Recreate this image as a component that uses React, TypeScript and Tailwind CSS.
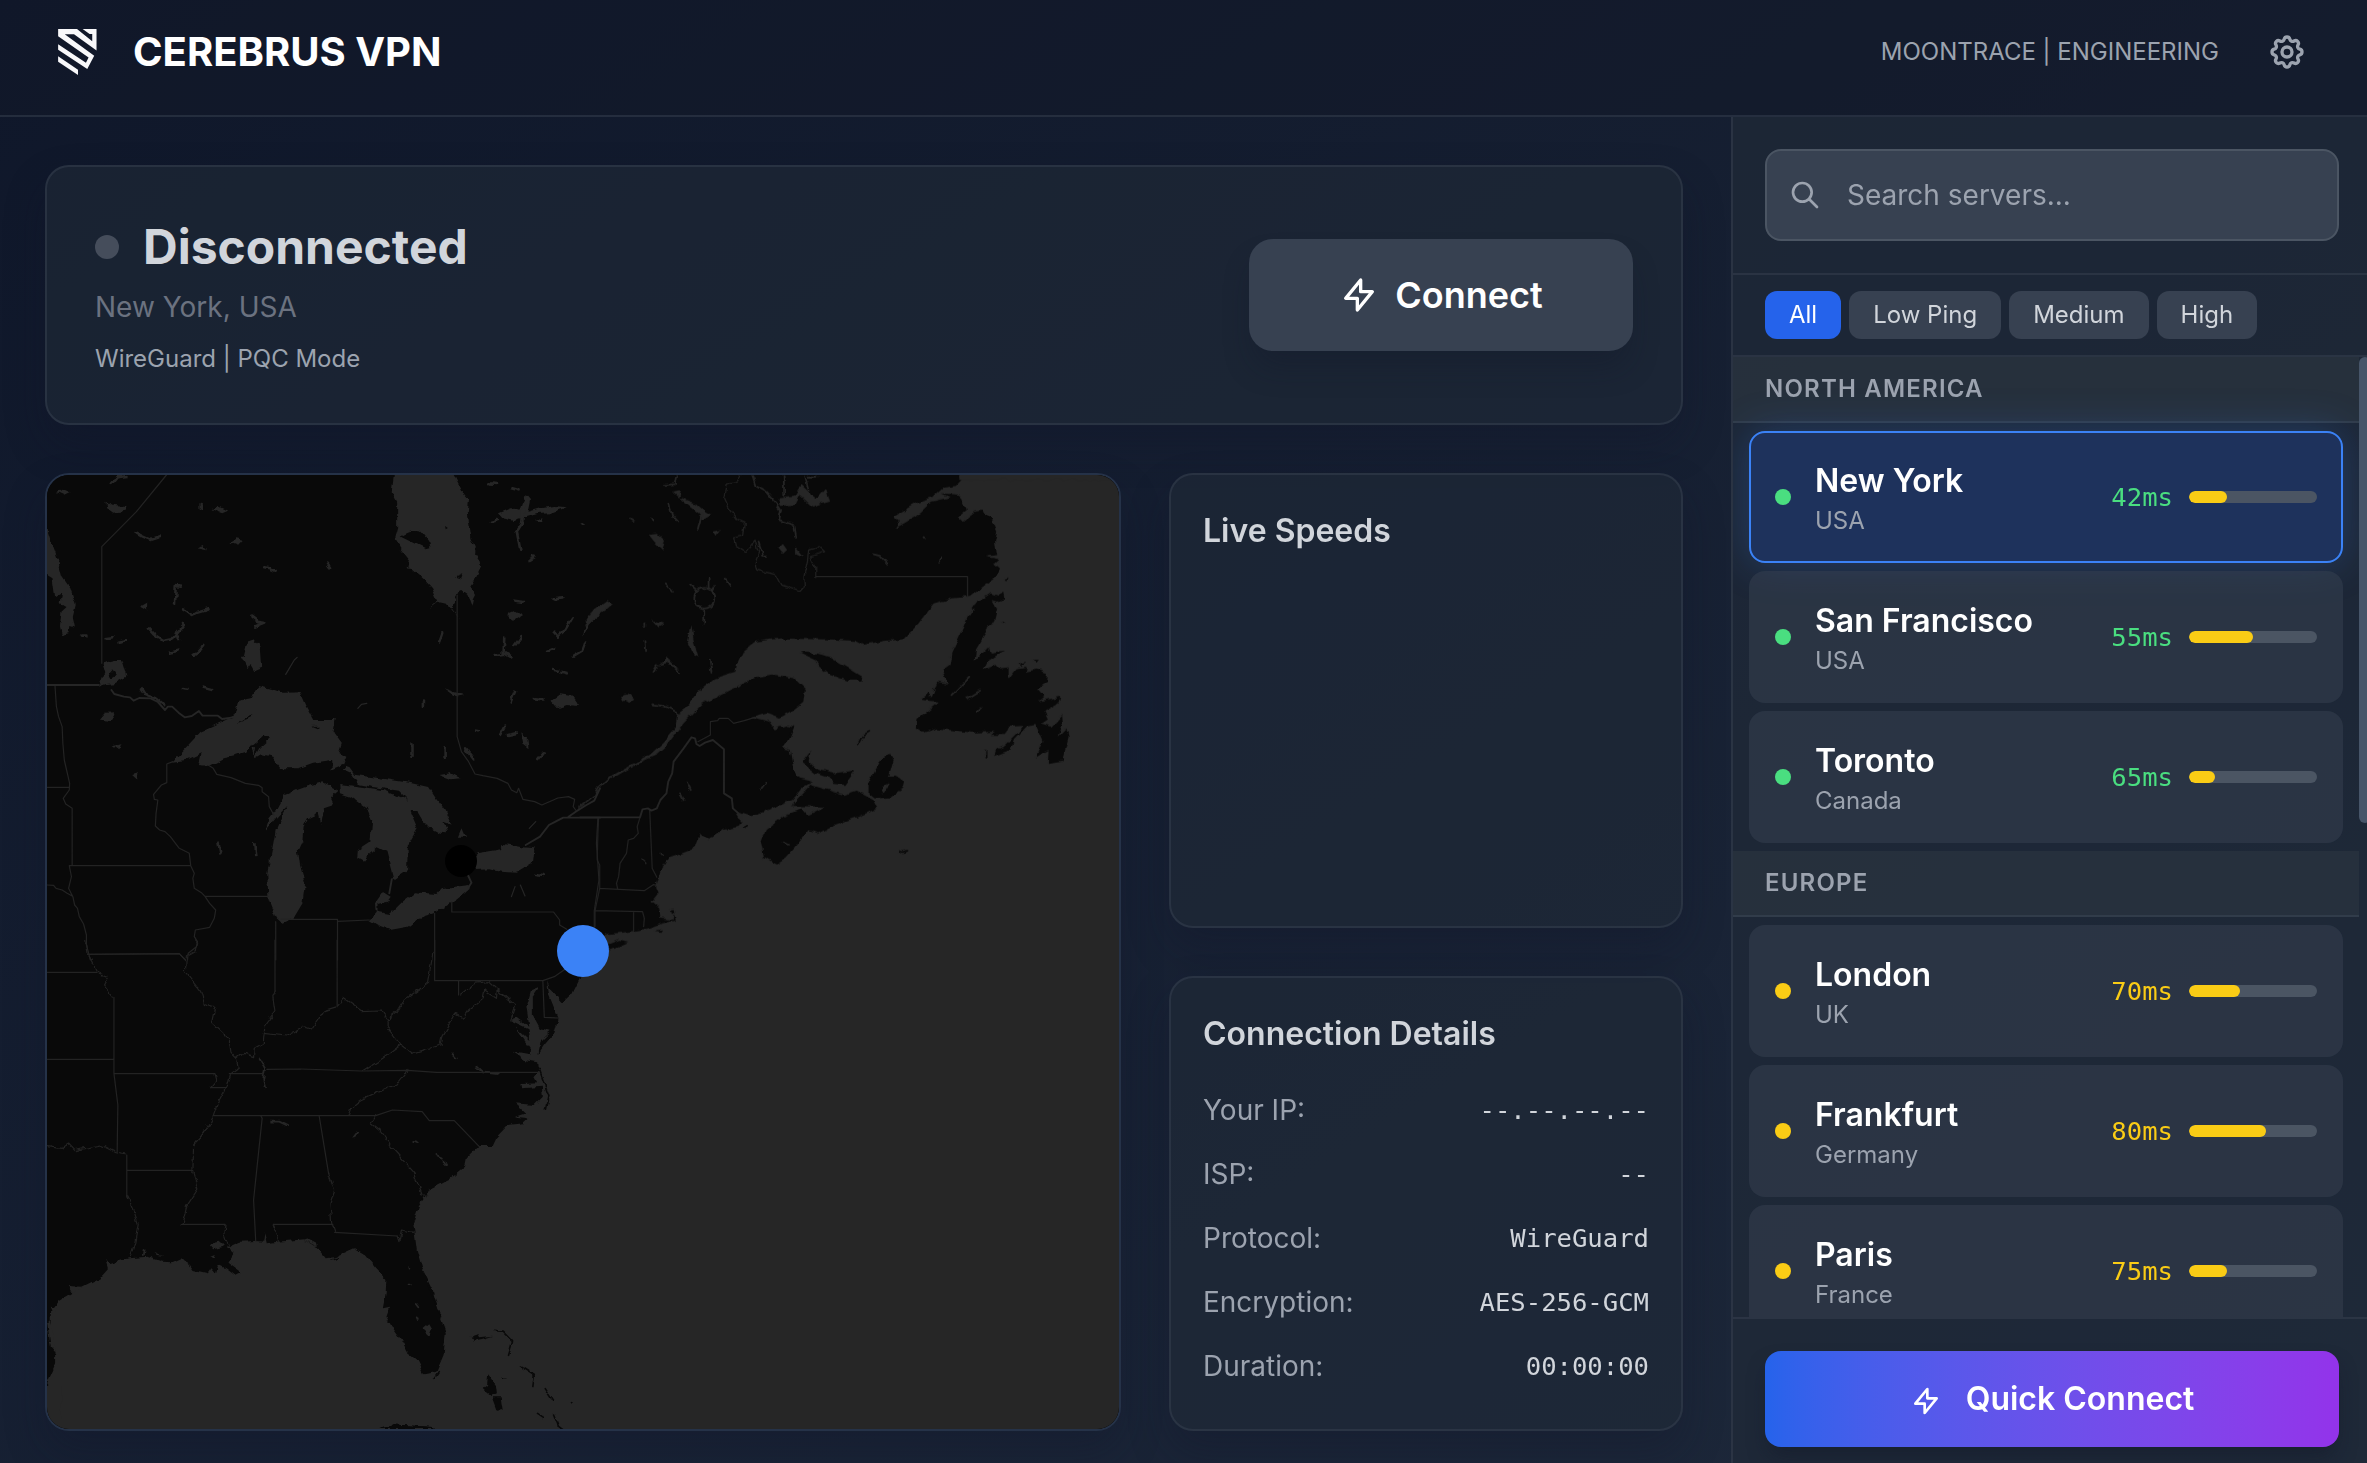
import React from "react";

type Server = { city: string; country: string; ping: number; load: number };

const northAmerica: Server[] = [
  { city: "New York", country: "USA", ping: 42, load: 30 },
  { city: "San Francisco", country: "USA", ping: 55, load: 50 },
  { city: "Toronto", country: "Canada", ping: 65, load: 20 },
];

const europe: Server[] = [
  { city: "London", country: "UK", ping: 70, load: 40 },
  { city: "Frankfurt", country: "Germany", ping: 80, load: 60 },
  { city: "Paris", country: "France", ping: 75, load: 30 },
];

const details = [
  ["Your IP:", "--.--.--.--"],
  ["ISP:", "--"],
  ["Protocol:", "WireGuard"],
  ["Encryption:", "AES-256-GCM"],
  ["Duration:", "00:00:00"],
];

const BOLT = "M13 10V3L4 14h7v7l9-11h-7z";
const SEARCH = "M21 21l-6-6m2-5a7 7 0 11-14 0 7 7 0 0114 0z";
const COG =
  "M10.325 4.317c.426-1.756 2.924-1.756 3.35 0a1.724 1.724 0 002.573 1.066c1.543-.94 3.31.826 2.37 2.37a1.724 1.724 0 001.065 2.572c1.756.426 1.756 2.924 0 3.35a1.724 1.724 0 00-1.066 2.573c.94 1.543-.826 3.31-2.37 2.37a1.724 1.724 0 00-2.572 1.065c-.426 1.756-2.924 1.756-3.35 0a1.724 1.724 0 00-2.573-1.066c-1.543.94-3.31-.826-2.37-2.37a1.724 1.724 0 00-1.065-2.572c-1.756-.426-1.756-2.924 0-3.35a1.724 1.724 0 001.066-2.573c-.94-1.543.826-3.31 2.37-2.37.996.608 2.296.07 2.572-1.065z M15 12a3 3 0 11-6 0 3 3 0 016 0z";

function Icon({ d, className }: { d: string; className: string }) {
  return (
    <svg viewBox="0 0 24 24" fill="none" stroke="currentColor" strokeWidth={2} strokeLinecap="round" strokeLinejoin="round" className={className}>
      <path d={d} />
    </svg>
  );
}

function Logo() {
  return (
    <svg viewBox="84 58 117 139" className="h-[46px] w-[39px]" fill="#f8f8fa">
      <path d="M84 58H141L187 95V73H179L158 58H200V123L132 74H104L193 139L172 179L84 121V104L168 160L176 144L84 80Z" />
      <path d="M84 140L144 181V197L84 157Z" />
    </svg>
  );
}

const WATER = "#262626";
const LAND = "#090909";

const lakesNW = [
  "M991 45L985 95L1000 125L1000 205L992 235L1008 265L1038 305L1035 318L1022 325L1042 327L1075 358L1098 385L1112 420L1086 446L1112 425L1140 432L1178 481L1155 447L1168 400L1182 393L1197 405L1208 437L1212 418L1218 405L1205 380L1222 350L1235 322L1230 300L1218 280L1220 262L1208 235L1198 160L1201 120L1185 100L1160 45L1150 20H985Z",
  "M370 905L400 872L450 815L520 780L545 765L555 722L590 715L600 692L612 678L650 688L680 698L730 697L745 735L768 780L828 780L822 815L845 848L836 880L858 890L848 915L820 928L818 900L765 908L722 925L675 925L650 890L620 882L600 895L598 870L590 855L575 878L545 888L515 895L475 918L442 915L450 880L410 900Z",
  "M660 1375L640 1320L636 1240L648 1180L660 1110L680 1060L690 1040L660 1075L630 1115L640 1080L660 1055L685 1005L720 990L745 980L790 967L835 990L812 1012L822 1035L795 1045L788 1092L780 1060L750 1075L738 1100L735 1140L722 1170L728 1215L742 1270L735 1330L710 1375L675 1390Z",
  "M838 972L900 980L960 990L1030 1020L1005 992L930 980L890 972L870 940L848 930L860 915L880 944L950 955L1035 968L1090 982L1110 1015L1135 1050L1155 1095L1130 1085L1140 1120L1120 1118L1080 1095L1055 1050L1035 1050L1057 1105L1030 1155L1028 1230L990 1258L970 1175L945 1162L920 1185L905 1205L888 1195L890 1170L925 1145L930 1080L915 1045L870 1010L840 1000Z",
  "M922 1380L940 1358L938 1330L960 1296L982 1310L972 1325L945 1332L945 1355L980 1362L1015 1325L1050 1297L1110 1302L1125 1285L1200 1275L1200 1290L1165 1320L1105 1360L1060 1375L1030 1400L980 1410L950 1398Z",
  "M1222 1180L1290 1168L1300 1152L1350 1162L1385 1165L1380 1210L1335 1238L1290 1235L1260 1228L1218 1230Z",
  "M20 208L28 235L50 300L62 350L85 385L100 435L92 470L98 500L82 495L80 520L62 525L56 500L60 455L75 440L58 430L62 395L42 408L35 355L20 345L0 340V200Z",
  "M570 590L580 545L600 538L618 560L622 620L600 630L590 612L580 628L562 590Z",
  "M165 680L180 640L172 610L210 600L228 600L242 650L210 670L185 672Z",
  "M186 125L205 135L245 138L240 152L205 158L188 145Z",
  "M45 95L65 88L88 98L70 107Z M480 148L500 138L527 152L510 160Z M440 262L455 252L468 268Z M533 248L550 238L568 242L555 257Z",
  "M165 782L185 758L212 757L195 785Z M280 440L300 428L300 452Z M206 855L228 850L222 868Z M258 945L275 940L275 962Z M1170 1130L1180 1105L1190 1130Z",
  "M1285 160L1320 145L1345 152L1360 105L1372 120L1365 155L1400 145L1440 138L1475 142L1430 160L1390 162L1330 180L1295 172Z M1385 180L1410 172L1405 185Z",
  "M1308 465L1330 455L1350 468L1325 485Z M1432 722L1460 700L1490 705L1512 738L1475 735L1450 745Z M1345 820L1365 840L1368 865L1350 850Z",
  "M1520 530L1530 480L1568 430V460L1540 490Z M1118 945L1150 940L1178 955L1150 958Z M1130 685L1150 692L1185 705L1165 712Z",
];

const streamsNW = [
  "M245 48L215 52L198 75 M268 218L285 228L310 240L338 230 M628 322L642 325L660 332 M803 308L812 322 M450 132L450 146",
  "M395 380L380 378L378 430 M400 448L425 465L440 455L472 445 M305 505L318 520L345 540L370 535L382 520L403 492 M380 520L392 540 M362 578L388 572 M430 585L445 575L460 555",
  "M592 470L610 485L628 488L600 500 M118 530L130 530 M180 535L203 532 M220 545L245 540",
  "M280 685L290 700L320 712L345 735 M400 684L416 686 M458 683L482 690 M500 1150L505 1180 M600 1152L603 1185 M1043 850L1043 888 M1133 862L1133 892 M1190 865L1212 895",
  "M1258 70L1280 72 M1320 82L1340 88 M1355 130L1350 190L1335 215L1345 270 M1262 185L1282 180 M1368 300L1385 290 M1328 422L1352 425 M1438 418L1466 415",
  "M1300 535L1298 578L1320 592 M1276 585L1300 582 M1328 558L1348 528 M1438 515L1450 530L1470 510L1490 475 M1420 575L1440 565 M1495 590L1518 575L1528 545 M1435 630L1450 632 M1460 635L1475 640",
  "M1318 725L1330 695 M1383 715L1410 718 M1288 825L1300 800 M1310 825L1332 820 M1395 900L1410 880 M1118 545L1126 520 M1388 1242L1410 1245 M1218 812L1226 814 M1515 190L1522 192 M1075 722V738",
];

const fineStreamsNW =
  "M720 592L712 600L688 643 M890 745L900 733L915 730 M1370 1105L1388 1085 M1320 1310L1330 1280 M1345 1275L1358 1308";

const bordersNW =
  "M354 45L270 155L173 260V610 M42 678L46 740L52 770L62 800L64 850L68 900L83 970L82 990L65 1015L72 1032L90 1045V1217 M20 982H82 M82 1217H422 M372 905L355 912V968L340 975L318 1003L320 1018L330 1020L325 1060L323 1098L335 1110L350 1115L365 1130L390 1165L418 1180L422 1217L432 1240L428 1255L432 1285L452 1298L462 1309 M462 1309H640 M475 918L485 925L495 943L535 953L575 970L612 976L622 983L622 995L640 1010L642 1040L655 1065 M82 1217L88 1250L80 1285L92 1310L97 1335L105 1345L110 1370L122 1392L130 1425L130 1455L141 1500 M20 1275L38 1276L45 1285L62 1290L76 1300L90 1308 M462 1309L475 1330L492 1350L488 1375L475 1402L435 1410L432 1430L441 1445L438 1460L415 1480L413 1500 M133 1483L390 1481L408 1500 M660 1385V1500 M675 1378H833V1500 M833 1384L922 1380 M1105 1360V1500 M1153 1325V1356H1438L1455 1380L1455 1395L1475 1408 M1168 405V830L1180 875L1200 905L1218 942L1240 947L1280 955L1310 970L1320 990L1335 998L1340 985L1352 1018L1385 1025L1405 1035L1450 1014L1480 1010L1497 1018L1493 1040L1500 1050 M1562 1075L1558 1150L1562 1210L1565 1260L1552 1352V1405";

const heavyNW =
  "M20 675H165 M200 690L208 702L235 710L252 712L262 722L278 714L310 715L330 726L350 750L358 740L370 740L388 758L405 772L425 768L445 753L455 767L498 767L510 777L540 772 M985 1258L978 1300 M1198 1245L1208 1268L1200 1282 M1360 1155L1400 1130L1425 1095L1465 1073H1568 M1480 1070L1500 1055L1530 1035L1552 1022L1568 985";

const oceanNE =
  "M1060 45L1068 60L1055 75L1020 80L985 115L940 130L900 155L878 170L893 185L880 207L900 195L940 170L985 125L1035 112L1010 100L1065 105L1083 150L1060 170L1072 183L1105 155L1127 152L1150 170L1168 215L1162 245L1168 285L1135 290L1172 298L1160 310L1176 325L1165 350L1092 410L1040 415L990 430L940 500L905 538L850 543L792 555L770 543L700 538L620 537L560 535L490 545L458 570L440 610L435 635L375 655L330 695L300 740L275 760L270 800L235 845L195 885L150 910L85 950L90 956L160 912L215 885L240 860L290 790L340 735L420 690L490 655L550 645L600 655L632 690L628 725L600 750L560 773L522 758L480 770L530 785L545 808L580 795L600 800L585 840L565 865L590 870L600 930L615 955L655 965L620 985L595 1020L520 1052L500 1060L470 1067L435 1055L452 1085L445 1100L400 1110L360 1140L335 1120L320 1165L285 1180L250 1190L225 1235L213 1280L220 1298L200 1325L222 1345L225 1375L262 1380L265 1360L250 1350L262 1347L268 1382L230 1390L190 1405L120 1418L75 1422L60 1440L10 1500H1568V45Z";

const islandsNE = [
  "M615 577Q640 570 700 592L760 630L790 650L788 662L750 662L700 645L670 620L660 600Z",
  "M1110 430L1150 400L1170 407L1185 398L1188 415L1170 425L1155 420L1168 445L1160 480L1130 530L1108 570L1105 605L1145 560L1150 578L1187 572L1140 605L1130 630L1165 615L1175 625L1200 622L1200 660L1225 625L1250 620L1248 635L1280 628L1310 640L1308 665L1280 685L1300 710L1285 725L1345 710L1340 730L1300 755L1310 775L1290 790L1320 800L1350 765L1352 790L1340 830L1362 805L1368 830L1350 905L1310 912L1312 870L1275 893L1295 845L1275 795L1250 800L1215 840L1205 870L1160 888L1165 870L1190 858L1225 820L1240 798L1200 800L1190 825L1150 825L1165 815L1100 818L1000 805L960 818L943 805L945 780L1005 725L955 720L975 700L985 712L1000 665L1030 672L1015 630L1035 615L1040 580L1075 500L1085 470Z",
  "M868 878L878 900L865 950L880 950L910 965L905 985L870 1012L825 1015L808 1000L808 970L840 905Z",
  "M590 1038L645 975L740 1005L775 992L820 1018L832 1045L780 1070L700 1102L670 1120L640 1110L600 1165L575 1195L550 1213L515 1190L507 1150L520 1110L570 1070L625 1045L640 1065L685 1040Z",
  "M645 875L640 905L665 930L710 940L770 932L740 975L712 972L700 955L660 940L622 908Z",
  "M75 1455L110 1440L135 1445L85 1468Z M1228 612L1250 605L1235 618Z M1268 600L1282 600L1275 608Z M1180 485L1188 488L1182 492Z M1192 356L1200 352L1196 362Z M1132 870H1138V892H1133Z M212 1412L230 1408L225 1416Z",
];

const lakesNE = [
  "M260 95L280 90L275 110L325 130L345 150L368 165L345 180L330 160L290 125Z",
  "M555 115L600 110L620 75L640 95L665 115L690 85L700 125L650 140L615 105L600 135L560 138Z",
  "M190 225L215 222L238 245L230 270L205 245Z M555 265L568 252L580 270L568 282Z M605 262L625 290L605 280Z M370 215L392 210L378 228Z",
  "M10 500L30 455L75 420L92 432L50 470Z M115 705L135 700L152 718L138 732L120 720Z M202 480L235 492L220 502Z",
  "M302 545L312 495L318 540L332 592L318 585Z M215 620L235 605L245 585L255 605L275 625L245 612Z M842 985L868 970L850 1000Z",
];

const streamsNE = [
  "M235 75L268 72L272 48 M250 135L258 165L278 188 M340 165L330 210 M140 175L150 182 M198 175L205 188 M240 370L260 395 M405 355L418 375",
  "M485 48L495 80L520 95L548 130L560 150L555 180L600 195L605 230 M500 245L510 290L522 290 M570 45L572 110 M630 50L640 90 M640 50L662 50",
  "M820 283L838 288L862 315 M1008 305L1012 292 M962 228L968 236 M205 733L240 740L278 760 M363 600L368 635 M180 490V500 M183 540L185 570 M205 635L215 615 M262 620L276 636",
  "M330 390A28 30 0 1 1 364 440A28 30 0 0 1 320 415A28 30 0 0 1 330 390 M345 450L345 490 M308 375L325 392 M360 355V385 M378 378L368 395",
  "M0 1042L40 1005L50 985L85 953 M280 1000L290 1020 M300 965L310 990 M508 988L522 968 M172 1198L184 1210 M225 1178L232 1186 M570 1148L582 1154 M1040 705L1090 650 M1085 715L1120 692 M1112 755L1124 742",
];

const wigglyNE =
  "M450 45L440 65L412 75L405 115L420 150L440 180L460 190L455 225L430 230L435 255L465 275L490 240L500 280L490 310L495 330L550 345L565 375L615 395L628 380L627 350L637 300L640 270L670 260L685 275L645 290L660 320L660 350";

const bordersNE =
  "M660 350H1085V410 M330 845L365 825V785L385 782L390 775L415 775L430 790L460 782L490 772 M195 1048L202 1225L215 1252 M168 1072L160 1100L163 1120L150 1135L135 1140L130 1180L112 1210L108 1250L102 1270L105 1285 M55 1285L180 1292L205 1274L212 1275 M42 1352L175 1355L180 1375L178 1400 M150 1355V1412 M52 1075L50 1120L48 1200L55 1215V1285L42 1352V1400";

const heavyNE =
  "M0 1072H168L175 1048L190 1045L200 1052L215 1045L225 1020L242 1000L247 965L258 940L262 905L290 865L312 832L322 835L326 852L335 858L350 848L372 840L403 868V1000L425 1015L428 1045L452 1068L452 1085";

const oceanSE =
  "M20 1330L45 1270V1240L30 1190V1120L55 1080L110 1045L165 1015L190 985L183 960L200 972L250 955L300 950L340 965L370 967L395 955L420 975L430 990L470 1000L480 985L492 1000L500 975L520 985L545 1005L563 995L525 965L542 935L520 925L560 905L605 903L625 905L628 880L635 910L665 905L740 898L775 920L800 955L825 952L880 925L905 940L940 985L970 1020L968 1060L960 1105L980 1100L970 1130L990 1170L1010 1200L1030 1240L1055 1260L1075 1303L1110 1295L1130 1245L1136 1180L1120 1130L1100 1050L1070 985L1055 930L1045 850L1060 800L1090 750L1145 720L1190 680L1195 655L1230 618L1265 618L1275 595L1310 555L1355 550L1370 535L1330 530L1360 520L1330 490L1385 495L1408 470L1405 440L1350 445L1348 432L1395 430L1385 410L1395 397L1392 367L1355 360L1320 335L1370 345L1372 325L1330 260L1370 300L1365 265L1315 240L1335 232L1370 260L1362 200L1375 150L1398 140L1380 170V225L1400 265L1430 272L1403 300L1395 342L1412 315L1440 280L1452 235L1440 205L1425 165L1420 120L1430 150L1462 188L1490 160L1512 112L1568 60V1467H20Z";

const islandsSE = [
  "M1206 1190L1228 1183L1232 1192L1270 1187L1240 1197L1215 1202Z",
  "M1255 1303L1280 1340L1282 1360L1265 1368L1240 1345L1252 1335Z M1268 1372L1290 1372L1295 1410L1282 1412Z",
  "M950 1467L1000 1454L1100 1461L1105 1467Z M1295 1313H1310L1298 1317Z M1486 1385L1492 1388L1488 1394Z",
];
const cayLines =
  "M1270 1171L1295 1174L1323 1205L1312 1246 M1345 1278L1384 1305L1380 1340 M1412 1343L1436 1382 M1393 1420L1410 1432 M1438 1422L1450 1455L1465 1467 M1397 385L1425 470L1418 508 M1105 1315L1118 1295 M815 960L832 955 M1087 1035L1125 1140";

const lakesSE = [
  "M1070 1168L1090 1150L1098 1165L1090 1188Z M472 912L500 905L515 920L485 928Z M1030 978L1040 988L1034 996Z M320 938L345 950L330 948Z M480 950L492 945L488 957Z",
  "M20 1150L28 1140L45 1240L30 1220Z M30 1100L48 1105L38 1120Z M78 1038L120 1040L90 1060Z",
];
const streamsSE =
  "M650 545L670 545L695 558 M878 595L892 575 M1045 603L1058 606 M1110 648L1125 656 M1132 662L1137 672 M1222 380L1240 397L1282 402 M1155 342L1167 355 M1032 1037H1038 M1055 1092L1062 1102 M1055 1132L1058 1140 M290 930L288 945 M615 357L630 385L625 420L630 445 M745 898L775 915";

// State lines that follow rivers.
const riversSE =
  "M128 0L135 43L160 97L190 110L178 135L205 172 M440 0L435 35L410 50L407 95L450 155L460 190L490 200L480 250L530 300L535 340L550 357L555 385L530 405L520 445L497 490L485 527L465 570L430 615L428 700L442 747L410 800L398 853 M490 401L495 420L478 443 M20 620L60 625L80 612L98 632L170 615L216 640L243 645 M243 770L265 820L275 850L265 910L253 950 M658 155L652 170L658 215L630 255L625 310L600 325L598 350L570 340L550 357 M625 280L690 288L735 262L760 270L795 212L832 200L850 175L900 212L955 210L972 238L1000 215L1020 180L1085 130L1100 40 M1172 165L1215 130L1255 125L1280 150L1278 172L1245 150L1240 175L1200 210L1185 235L1162 222L1125 290L1120 315L1040 340L1010 315L972 262V238 M1010 315L960 355L905 393 M1280 150L1330 195L1315 240 M863 527L870 505L900 480L940 460L1000 432L1030 391 M940 527L925 550L950 570L990 630L1045 695L1070 765L1085 765 M808 700L825 750L812 790L817 850L825 877 M1000 888L1005 905L1012 870L1045 877 M653 853L667 890V905 M518 853L515 880L527 917";

const bordersSE =
  "M207 172V400L218 495L216 640 M20 97H160 M20 358H205 M133 43L390 41L408 62 M398 853H518 M207 401H490 M478 443H520 M243 645V770 M243 691H428 M658 0V155 M832 0V200 M1105 0V122H1408 M1172 122V165 M530 401H625 M635 388L730 387L900 393L1030 391L1110 397L1395 397 M485 527H940 M940 527L987 510L1070 515L1090 542H1160L1230 620 M782 530L808 700 M825 877L1000 888 M820 853H653 M618 527L622 535L598 780L604 903 M1408 122L1412 232L1452 234 M1408 122L1440 110L1470 88";

function Lines({ d, width = 1.2, color = "#232323" }: { d: string; width?: number; color?: string }) {
  return <path d={d} fill="none" stroke={color} strokeWidth={width} strokeLinejoin="round" strokeLinecap="round" vectorEffect="non-scaling-stroke" />;
}

function Shapes({ list, fill }: { list: string[]; fill: string }) {
  return <>{list.map((d) => <path key={d} d={d} fill={fill} />)}</>;
}

function WorldMap() {
  const nw = "translate(40 460) scale(.357143 .333333)";
  const ne = "translate(580 460) scale(.357143 .333333)";
  const se = "translate(40 940) scale(.357143 .333333)";
  return (
    <svg viewBox="47 475 1072 954" preserveAspectRatio="none" className="block h-full w-full">
      <defs>
        <filter id="coast" filterUnits="userSpaceOnUse" x="30" y="455" width="1110" height="995" colorInterpolationFilters="sRGB">
          <feTurbulence type="fractalNoise" baseFrequency="0.12" numOctaves="2" seed="4" result="n" />
          <feDisplacementMap in="SourceGraphic" in2="n" scale="6" xChannelSelector="R" yChannelSelector="G" />
        </filter>
      </defs>
      <rect x="40" y="465" width="1090" height="975" fill={LAND} />
      <g filter="url(#coast)">
        <g transform={nw}>
          <Shapes list={lakesNW} fill={WATER} />
          {streamsNW.map((d) => <Lines key={d} d={d} width={2.6} color={WATER} />)}
          <path fill={LAND} d="M1010 230Q1040 208 1068 215L1090 245L1093 265L1082 268Z M1162 350L1185 340L1180 356Z M1134 198L1142 204L1136 208Z M552 790L598 758L585 775Z M592 860L625 830L647 832L615 862L600 892L605 862Z M760 798L780 797L775 805Z M192 640L205 625L215 645L200 655Z" />
        </g>
        <g transform={se}>
          <path d={oceanSE} fill={WATER} />
          <path d="M0 1335H60V1440H1568V1490H0Z" fill={WATER} />
          <Shapes list={islandsSE} fill={LAND} />
          <Shapes list={lakesSE} fill={WATER} />
          <Lines d={cayLines} width={1.6} color={LAND} />
          <Lines d={streamsSE} width={1.8} color={WATER} />
          <Lines d={riversSE} />
        </g>
        <g transform={ne}>
          <path d={oceanNE} fill={WATER} />
          <path d="M1062 20H1590V1500H1540V60H1062Z" fill={WATER} />
          <Shapes list={islandsNE} fill={LAND} />
          <Lines d="M810 815L790 828L780 850 M893 1173Q905 1180 917 1172 M464 1102L468 1096" width={1.6} color={LAND} />
          <Shapes list={lakesNE} fill={WATER} />
          {streamsNE.map((d) => <Lines key={d} d={d} width={1.8} color={WATER} />)}
          <Lines d={wigglyNE} />
        </g>
        <rect x="594" y="956" width="540" height="490" fill={WATER} />
        <g transform={se}>
          <Shapes list={[islandsSE[2]]} fill={LAND} />
        </g>
      </g>
      <g transform={nw}>
        <Lines d={bordersNW} />
        <Lines d={fineStreamsNW} color={WATER} />
        <Lines d={heavyNW} width={1.9} color={WATER} />
      </g>
      <g transform={ne}>
        <Lines d={bordersNE} />
        <Lines d={heavyNE} width={1.9} color={WATER} />
      </g>
      <g transform={se}>
        <Lines d={bordersSE} />
      </g>
      <circle cx="461" cy="861" r="16" fill="#000" />
      <circle cx="583" cy="951" r="26" fill="#3b82f6" />
    </svg>
  );
}

function ServerRow({ s, selected }: { s: Server; selected?: boolean }) {
  const fast = s.ping < 70;
  return (
    <div
      className={
        "flex h-[132px] shrink-0 items-center rounded-2xl border-2 px-6 " +
        (selected ? "border-[#3b82f6] bg-[#1e325c] shadow-[0_0_40px_rgba(59,130,246,0.25)]" : "border-transparent bg-[#374151]/50")
      }
    >
      <span className={"mr-6 size-4 rounded-full " + (fast ? "bg-[#4ade80]" : "bg-[#facc15]")} />
      <div className="flex-1">
        <div className="text-[32px] leading-[48px] font-semibold text-white">{s.city}</div>
        <div className="text-[24px] leading-[32px] text-[#9ca3af]">{s.country}</div>
      </div>
      <span className={"mr-4 font-['DejaVu_Sans_Mono',monospace] text-[25.6px] leading-[40px] " + (fast ? "text-[#4ade80]" : "text-[#facc15]")}>{s.ping}ms</span>
      <div className="h-3 w-32 overflow-hidden rounded-full bg-[#4b5563]">
        <div className="h-full rounded-full bg-[#facc15]" style={{ width: `${s.load}%` }} />
      </div>
    </div>
  );
}

function Region({ name, servers, selected }: { name: string; servers: Server[]; selected?: string }) {
  return (
    <section>
      <h3 className="h-[66px] border-b-2 border-[#374151]/70 bg-[#2b3440]/70 px-8 py-4 text-[24px] leading-[32px] font-semibold tracking-[0.05em] text-[#9ca3af]">{name}</h3>
      <div className="flex flex-col gap-2 px-4 py-2">
        {servers.map((s) => (
          <ServerRow key={s.city} s={s} selected={s.city === selected} />
        ))}
      </div>
    </section>
  );
}

const card = "rounded-3xl border-2 border-[#374151]/50 bg-[#1f2937]/60 shadow-[0_20px_40px_rgba(15,20,40,0.3)]";
const chip = "flex h-12 items-center rounded-xl px-6 text-[24px] ";

export default function App() {
  return (
    <div className="h-[1463px] w-[2367px] overflow-hidden bg-[#0f172a] font-['Inter',sans-serif]">
      <div className="flex h-[1479px] w-[2371px] flex-col bg-linear-to-br from-[#0f172a] to-[#1e293b]">
        <header className="flex h-[117px] shrink-0 items-start justify-between border-b-2 border-[#374151]/50 bg-[#111827]/50 pr-16 pl-[58px]">
          <div className="flex h-[103px] items-center gap-[36px]">
            <Logo />
            <h1 className="text-[40px] leading-[56px] font-bold text-white">CEREBRUS VPN</h1>
          </div>
          <div className="flex h-[103px] items-center gap-12 text-[#9ca3af]">
            <span className="text-[24px] leading-[32px]">MOONTRACE | ENGINEERING</span>
            <Icon d={COG} className="size-10" />
          </div>
        </header>

        <div className="flex min-h-0 flex-1">
          <main className="flex min-w-0 flex-1 flex-col gap-12 py-12 pr-12 pl-[45px]">
            <section className={card + " flex h-[260px] shrink-0 items-center justify-between px-12"}>
              <div>
                <div className="flex items-center gap-6">
                  <span className="size-6 rounded-full bg-[#454d5b]" />
                  <h2 className="text-[48px] leading-[64px] font-bold text-[#d1d5db]">Disconnected</h2>
                </div>
                <p className="mt-2 text-[28px] leading-[40px] text-[#6b7280]">New York, USA</p>
                <p className="mt-4 text-[24px] leading-[32px] text-[#9ca3af]">WireGuard | PQC Mode</p>
              </div>
              <button className="flex h-28 w-96 items-center justify-center gap-4 rounded-3xl bg-[#374151] text-[36px] font-semibold text-white shadow-[0_20px_30px_-6px_rgba(17,24,39,0.35)]">
                <Icon d={BOLT} className="size-10" />
                Connect
              </button>
            </section>

            <div className="grid min-h-0 flex-1 grid-cols-3 grid-rows-2 gap-12">
              <section className="col-span-2 row-span-2 overflow-hidden rounded-3xl border-2 border-[#253248] bg-[#090909] shadow-[0_20px_40px_rgba(15,20,40,0.3)]">
                <WorldMap />
              </section>
              <section className={card + " p-8"}>
                <h3 className="text-[32px] leading-[48px] font-semibold text-[#d1d5db]">Live Speeds</h3>
              </section>
              <section className={card + " p-8"}>
                <h3 className="text-[32px] leading-[48px] font-semibold text-[#d1d5db]">Connection Details</h3>
                <dl className="mt-8 flex flex-col gap-6">
                  {details.map(([k, v]) => (
                    <div key={k} className="flex h-10 items-center justify-between text-[28px]">
                      <dt className="text-[#9ca3af]">{k}</dt>
                      <dd className="font-['DejaVu_Sans_Mono',monospace] text-[25.6px] text-[#d1d5db]">{v}</dd>
                    </div>
                  ))}
                </dl>
              </section>
            </div>
          </main>

          <aside className="flex w-[640px] shrink-0 flex-col border-l-2 border-[#374151]/50 bg-[#1f2937]/70">
            <div className="border-b-2 border-[#374151]/50 p-8 pt-8">
              <div className="flex h-[92px] items-center gap-[26px] rounded-2xl border-2 border-[#4b5563] bg-[#374151] px-[22px] text-[#9ca3af]">
                <Icon d={SEARCH} className="size-8" />
                <span className="text-[28px]">Search servers...</span>
              </div>
            </div>
            <div className="flex gap-2 border-b-2 border-[#374151]/50 px-8 py-4">
              <button className={chip + "bg-[#2563eb] text-white"}>All</button>
              <button className={chip + "bg-[#374151] text-[#d1d5db]"}>Low Ping</button>
              <button className={chip + "bg-[#374151] text-[#d1d5db]"}>Medium</button>
              <button className={chip + "bg-[#374151] text-[#d1d5db]"}>High</button>
            </div>
            <div className="flex min-h-0 flex-1 overflow-hidden">
              <div className="flex-1">
                <Region name="NORTH AMERICA" servers={northAmerica} selected="New York" />
                <Region name="EUROPE" servers={europe} />
              </div>
              <div className="w-3">
                <div className="h-[466px] rounded-md bg-[#475569]" />
              </div>
            </div>
            <div className="border-t-2 border-[#374151]/50 p-8">
              <button className="flex h-24 w-full items-center justify-center gap-6 rounded-2xl bg-linear-to-r from-[#2563eb] to-[#9333ea] text-[32px] font-semibold text-white shadow-[0_12px_20px_-4px_rgba(17,24,39,0.5)]">
                <Icon d={BOLT} className="mt-1 size-8" />
                Quick Connect
              </button>
            </div>
          </aside>
        </div>
      </div>
    </div>
  );
}
